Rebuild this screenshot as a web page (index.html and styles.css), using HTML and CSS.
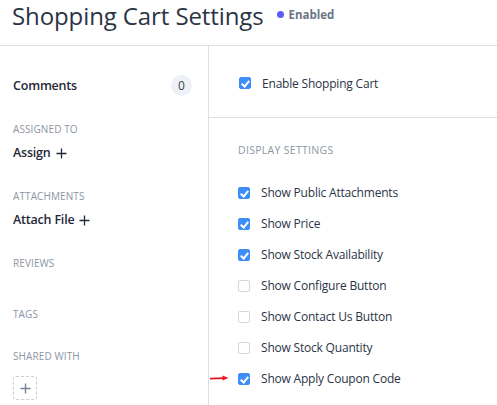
FILE: index.html
```html
<!DOCTYPE html>
<html>
<head>
<meta charset="utf-8">
<link rel="stylesheet" href="styles.css">
</head>
<body>
<header class="header">
  <h1 class="title">Shopping Cart Settings</h1>
  <span class="status"><span class="dot"></span>Enabled</span>
</header>
<div class="layout">
  <aside class="sidebar">
    <div class="comments">
      <span class="strong">Comments</span>
      <span class="badge">0</span>
    </div>
    <div class="group g-assign">
      <div class="label">ASSIGNED TO</div>
      <div class="strong action">Assign <svg class="plus" width="11" height="11" viewBox="0 0 11 11"><path d="M5.5 0.5V10.5M0.5 5.5H10.5" stroke="#1f2837" stroke-width="1.3"/></svg></div>
    </div>
    <div class="group g-attach">
      <div class="label">ATTACHMENTS</div>
      <div class="strong action">Attach File <svg class="plus" width="11" height="11" viewBox="0 0 11 11"><path d="M5.5 0.5V10.5M0.5 5.5H10.5" stroke="#1f2837" stroke-width="1.3"/></svg></div>
    </div>
    <div class="group g-reviews">
      <div class="label">REVIEWS</div>
    </div>
    <div class="group g-tags">
      <div class="label">TAGS</div>
    </div>
    <div class="group g-shared">
      <div class="label">SHARED WITH</div>
      <div class="addbox"><svg width="11" height="11" viewBox="0 0 11 11"><path d="M5.5 0.5V10.5M0.5 5.5H10.5" stroke="#7a8494" stroke-width="1.4"/></svg></div>
    </div>
  </aside>
  <main class="main">
    <section class="enable">
      <label class="row"><span class="cb on"></span>Enable Shopping Cart</label>
    </section>
    <section class="display">
      <div class="section-title">DISPLAY SETTINGS</div>
      <label class="row"><span class="cb on"></span>Show Public Attachments</label>
      <label class="row"><span class="cb on"></span>Show Price</label>
      <label class="row"><span class="cb on"></span>Show Stock Availability</label>
      <label class="row"><span class="cb"></span>Show Configure Button</label>
      <label class="row"><span class="cb"></span>Show Contact Us Button</label>
      <label class="row"><span class="cb"></span>Show Stock Quantity</label>
      <label class="row marked"><span class="arrow"><svg width="19" height="6" viewBox="0 0 19 6"><path d="M0.5 3.6 L14 3.2" stroke="#e8141b" stroke-width="1.8" fill="none" stroke-linecap="round"/><path d="M12.5 0.6 L18.5 3.1 L12.5 5.6 Z" fill="#e8141b"/></svg></span><span class="cb on"></span>Show Apply Coupon Code</label>
    </section>
  </main>
</div>
</body>
</html>
```

FILE: styles.css
```css
* { box-sizing: border-box; }
html, body { margin: 0; padding: 0; background: #fff; }
body {
  font-family: "Open Sans", "Segoe UI", sans-serif;
  color: #2b3445;
  font-size: 12px;
  width: 497px;
  height: 405px;
  overflow: hidden;
}
.header {
  height: 46px;
  border-bottom: 1px solid #dbe0e6;
  display: flex;
  align-items: flex-start;
  padding-left: 12px;
}
.title {
  margin: -1px 0 0 0;
  font-size: 24px;
  font-weight: 400;
  line-height: 34px;
  color: #2b3445;
  letter-spacing: -0.1px;
  white-space: nowrap;
}
.status {
  display: flex;
  align-items: center;
  margin-left: 13px;
  margin-top: 7px;
  font-size: 11.5px;
  font-weight: 700;
  color: #6b7585;
}
.dot {
  width: 7px; height: 7px; border-radius: 50%;
  background: #5c5cf6;
  margin-right: 5px;
}
.layout {
  display: flex;
  height: 359px;
}
.sidebar {
  width: 209px;
  border-right: 1px solid #dbe0e6;
  padding: 29px 16px 0 13px;
}
.strong { font-weight: 600; font-size: 12.5px; color: #1f2837; letter-spacing: -0.2px; }
.comments {
  display: flex;
  justify-content: space-between;
  align-items: center;
  height: 20px;
}
.badge {
  width: 21px; height: 21px; border-radius: 50%;
  background: #eef1f5;
  display: flex; align-items: center; justify-content: center;
  font-size: 12px; font-weight: 400; color: #3a4252;
}
.label {
  font-size: 10px;
  color: #8d95a3;
  font-weight: 400;
  letter-spacing: 0.1px;
  line-height: 14px;
}
.action {
  margin-top: 8px;
  line-height: 18px;
  display: flex;
  align-items: center;
}
.plus { margin-left: 5px; }
.g-assign { margin-top: 27px; }
.g-attach { margin-top: 27px; }
.g-reviews { margin-top: 27px; }
.g-tags { margin-top: 37px; }
.g-shared { margin-top: 28px; }
.addbox {
  margin-top: 13px;
  width: 24px; height: 24px;
  border: 1px dashed #c9cfd8;
  border-radius: 3px;
  display: flex; align-items: center; justify-content: center;
}
.main { flex: 1; }
.enable {
  height: 72px;
  border-bottom: 1px solid #dbe0e6;
  padding: 27px 0 0 30px;
}
.display { padding: 24px 0 0 29px; }
.section-title {
  font-size: 10.5px;
  color: #8d95a3;
  letter-spacing: 0.3px;
  line-height: 16px;
  margin-bottom: 19px;
}
.row {
  display: flex;
  align-items: center;
  height: 31px;
  font-size: 12px;
  letter-spacing: -0.2px;
  color: #2b3445;
  position: relative;
}
.enable .row { height: 20px; }
.cb {
  width: 12px; height: 12px;
  border: 1px solid #d3d8df;
  border-radius: 2px;
  margin-right: 11px;
  background: #fff;
  position: relative;
  flex: none;
}
.cb.on {
  background: #3e8ef7;
  border-color: #3e8ef7;
}
.cb.on::after {
  content: "";
  position: absolute;
  left: 3px; top: 1px;
  width: 3px; height: 6px;
  border: solid #fff;
  border-width: 0 2px 2px 0;
  transform: rotate(40deg);
}
.arrow {
  position: absolute;
  left: -28px;
  top: 12px;
  display: block;
  line-height: 0;
}
```
